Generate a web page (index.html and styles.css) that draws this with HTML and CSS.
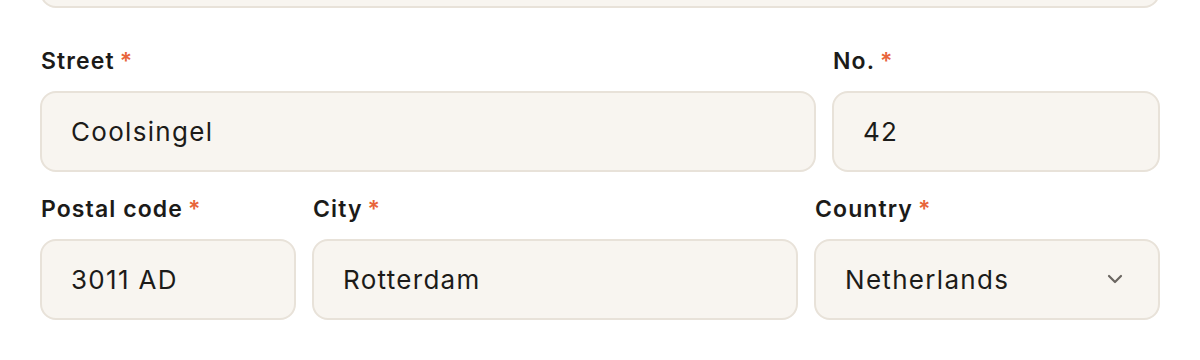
FILE: index.html
```html
<!DOCTYPE html>
<html lang="en">
<head>
    <meta charset="UTF-8">
    <meta name="viewport" content="width=device-width, initial-scale=1.0">
    <title>Address</title>
    <link rel="stylesheet" href="styles.css">
</head>
<body>
    <form class="address-form">
        <div class="field field-top">
            <input class="input" type="text" value="">
        </div>

        <div class="row row-street">
            <div class="field">
                <label>Street<span class="req">*</span></label>
                <input class="input" type="text" value="Coolsingel">
            </div>
            <div class="field">
                <label>No.<span class="req">*</span></label>
                <input class="input" type="text" value="42">
            </div>
        </div>

        <div class="row row-city">
            <div class="field">
                <label>Postal code<span class="req">*</span></label>
                <input class="input" type="text" value="3011 AD">
            </div>
            <div class="field">
                <label>City<span class="req">*</span></label>
                <input class="input" type="text" value="Rotterdam">
            </div>
            <div class="field">
                <label>Country<span class="req">*</span></label>
                <div class="select-wrap">
                    <select class="input select">
                        <option>Netherlands</option>
                    </select>
                    <svg class="chevron" width="18" height="18" viewBox="0 0 18 18">
                        <path d="M3 6 L9 12 L15 6" fill="none" stroke="#6b6661" stroke-width="2.2" stroke-linecap="round" stroke-linejoin="round"/>
                    </svg>
                </div>
            </div>
        </div>
    </form>
</body>
</html>
```

FILE: styles.css
```css
* {
    margin: 0;
    padding: 0;
    box-sizing: border-box;
}

body {
    font-family: 'Inter', 'Noto Sans', sans-serif;
    background: #ffffff;
    color: #1c1b19;
}

.address-form {
    padding: 0 40px;
}

.field {
    display: flex;
    flex-direction: column;
}

.field-top {
    margin-top: -73px;
}

label {
    font-size: 23px;
    line-height: 28px;
    font-weight: 600;
    letter-spacing: 1.1px;
    color: #1c1b19;
    margin-bottom: 16px;
    padding-left: 1px;
}

.req {
    color: #e8643a;
    margin-left: 5px;
}

.input {
    width: 100%;
    height: 81px;
    padding: 0 29px;
    font-family: inherit;
    font-size: 26px;
    letter-spacing: 1.3px;
    color: #1c1b19;
    background: #f8f5f0;
    border: 2px solid #e8e2d9;
    border-radius: 16px;
    outline: none;
}

.row {
    display: grid;
    column-gap: 16px;
}

.row-street {
    grid-template-columns: 1fr 328px;
    margin-top: 39px;
}

.row-city {
    grid-template-columns: 256px 1fr 346px;
    margin-top: 23px;
}

.select-wrap {
    position: relative;
}

.select {
    appearance: none;
    -webkit-appearance: none;
}

.chevron {
    position: absolute;
    right: 36px;
    top: 31px;
    pointer-events: none;
}
```
